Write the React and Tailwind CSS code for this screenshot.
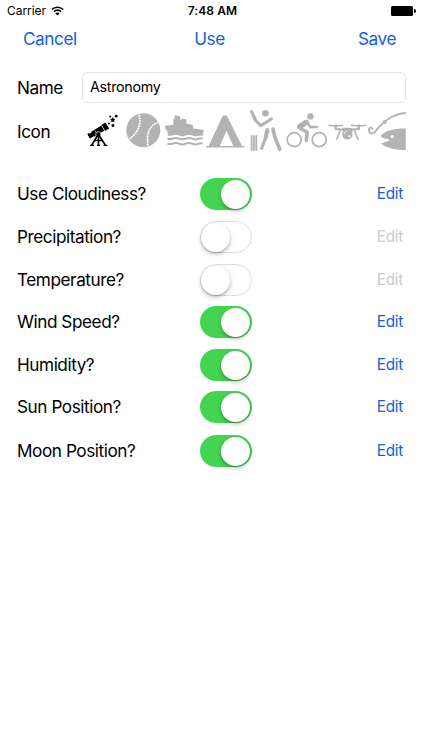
import { useState } from 'react';

const ICONS = ['telescope', 'baseball', 'ship', 'tent', 'cricket', 'bike', 'drone', 'fishing'];

const SETTINGS = [
  { label: 'Use Cloudiness?', on: true, height: 'h-[43px]' },
  { label: 'Precipitation?', on: false, height: 'h-[43px]' },
  { label: 'Temperature?', on: false, height: 'h-[42px]' },
  { label: 'Wind Speed?', on: true, height: 'h-[43px]' },
  { label: 'Humidity?', on: true, height: 'h-[42px]' },
  { label: 'Sun Position?', on: true, height: 'h-[44px]' },
  { label: 'Moon Position?', on: true, height: 'h-[43px]' },
];

// All glyphs share a 40.4 x 40 box
const GLYPHS = {
  telescope: (
    <>
      <path d="M6 25.5 L10.5 22.8" strokeWidth="4.4" />
      <path d="M9.8 23.2 L20 17" strokeWidth="6" />
      <path d="M20.2 17 L24.3 14.5" strokeWidth="7" />
      <path d="M5 22.4 L7.4 27" strokeWidth="1.6" />
      <path d="M12 19.4 L14.6 24" stroke="#fff" strokeWidth=".6" />
      <path d="M18.6 14.4 L21.8 20" stroke="#fff" strokeWidth=".6" />
      <circle cx="15.3" cy="23.3" r="2.6" fill="currentColor" stroke="#fff" strokeWidth=".7" />
      <path d="M14.2 25 L8.8 34 M15.5 25 V34 M16.5 25 L22.3 34 M12 29.5 H19" strokeWidth="1.6" />
      <path d="M7 34.3 H11 M14 34.3 H17 M20.5 34.3 H24.5" strokeWidth="1.3" />
      <path
        d="M29.8 6.5 L30.5 8 L32 8.2 L30.9 9.4 L31.2 11 L29.8 10.2 L28.4 11 L28.7 9.4 L27.6 8.2 L29.1 8Z"
        fill="currentColor"
        strokeWidth=".5"
      />
      <g fill="currentColor" stroke="none">
        <circle cx="27.2" cy="5.4" r="1" />
        <circle cx="33.2" cy="5.2" r="1.4" />
        <circle cx="26" cy="12.4" r="1" />
        <circle cx="30" cy="14.5" r="1.5" />
      </g>
    </>
  ),
  baseball: (
    <>
      <circle cx="20.3" cy="19.3" r="17" fill="currentColor" stroke="none" />
      <g stroke="#fff">
        <path d="M15.3 2 C18.2 9.5 18 20 6.3 28 M35 11.6 C26.5 14 22.8 23 25.2 35.8" strokeWidth=".9" />
        <path
          d="M15.3 2 C18.2 9.5 18 20 6.3 28 M35 11.6 C26.5 14 22.8 23 25.2 35.8"
          strokeWidth="2.4"
          strokeDasharray=".8 1.8"
        />
      </g>
    </>
  ),
  ship: (
    <>
      <path
        d="M1 14.8 L9.3 13.8 V8.5 L10.2 8 L11 4.3 L16.1 5.2 L16.4 8.8 H17.5 L18 7.5 L22.3 8.3 L22.6 12.6 L28.8 14 L29.3 17.4 L39.8 18.9 L38.6 25.2 C36 23.5 34 25.3 31.5 25.3 C28.5 25.3 28 23.7 25 23.7 C22 23.7 21.5 25.3 18.5 25.3 C15.5 25.3 15 23.7 12 23.7 C9 23.7 8 25.3 4 24.8 L3.4 20.3 C1.6 19.3 1 17.5 1 14.8Z"
        fill="currentColor"
        stroke="none"
      />
      <path
        d="M3.5 27.5 C7 29 9 26.9 12 26.9 C15 26.9 15.5 28.4 18.5 28.4 C21.5 28.4 22 26.9 25 26.9 C28 26.9 28.5 28.4 31.5 28.4 C34.5 28.4 35.5 26.5 38.8 27.5 M3.5 32.6 C7 34.2 9 31.9 12 31.9 C15 31.9 15.5 33.5 18.5 33.5 C21.5 33.5 22 31.9 25 31.9 C28 31.9 28.5 33.5 31.5 33.5 C34.5 33.5 35.5 31.5 38.8 32.6"
        strokeWidth="2"
      />
    </>
  ),
  tent: (
    <>
      <path
        d="M18.8 4.5 H22.8 L38 35 H29.3 L22.5 19.7 L15.8 35 H4.7Z"
        fill="currentColor"
        stroke="none"
      />
      <path d="M2 35.8 H40.4" strokeWidth="1.6" />
    </>
  ),
  cricket: (
    <>
      <path d="M6.6 .6 L10 8.2" strokeWidth="3.2" strokeLinecap="round" />
      <path d="M10 8.8 L15.7 14.8 L26.6 7.8" strokeWidth="2.9" strokeLinecap="round" strokeLinejoin="round" />
      <circle cx="20.4" cy="2.2" r="3.3" fill="currentColor" stroke="none" />
      <path d="M6.6 24.2 V39.8 M9 24.2 V39.8 M11.3 24.2 V39.8" strokeWidth="1.8" />
      <path d="M21.5 19.5 L20.2 28 L16.2 38.5" strokeWidth="3" />
      <path d="M22.4 19 L20.6 27.2" strokeWidth="4" strokeLinecap="round" />
      <path d="M28 18 L30 26.5 L34.8 38.3" strokeWidth="3.6" strokeLinecap="round" />
    </>
  ),
  bike: (
    <>
      <circle cx="9.2" cy="28.7" r="7" strokeWidth="1.7" />
      <circle cx="34.2" cy="28.7" r="7" strokeWidth="1.7" />
      <circle cx="25.4" cy="5.4" r="3.2" fill="currentColor" stroke="none" />
      <path d="M14.7 15.8 L21.2 11.3" strokeWidth="5.4" strokeLinecap="round" />
      <path d="M21.8 10.8 L25.3 16 L31.8 16" strokeWidth="2.4" strokeLinecap="round" strokeLinejoin="round" />
      <path d="M15 17.2 L22.2 21.3 L21.3 29.5" strokeWidth="3.5" strokeLinecap="round" strokeLinejoin="round" />
    </>
  ),
  drone: (
    <>
      <path d="M3.5 14.3 L10.7 15 L17.8 14.3 M26 14.3 L33.8 15 L41 14.3" strokeWidth="1.5" />
      <path d="M10.7 13.5 V19 M33.8 13.5 V19" strokeWidth="2.2" />
      <path d="M10 18 L17 18.4 H28 L34.5 18" strokeWidth="2" />
      <path d="M17 18 L19.5 16.8 H25.5 L28 18 L27 22 H18Z" fill="currentColor" stroke="none" />
      <path d="M15.6 19 L11.4 28.7 M29.2 19 L33.2 28.7" strokeWidth="1.6" />
      <circle cx="22.4" cy="23.4" r="5.2" fill="currentColor" stroke="none" />
      <path d="M19.2 23.4 A3.2 3.2 0 0 1 22.4 20.2" stroke="#fff" strokeWidth=".6" />
      <circle cx="24.4" cy="25.3" r="1.1" fill="#fff" stroke="none" />
    </>
  ),
  fishing: (
    <>
      <path
        d="M4.8 16.2 C1.6 17.4 2.8 22.6 6 22.5 C9.2 22.4 11 17.6 14.5 14.4 C20 9.2 27 3.2 39.8 2"
        strokeWidth="1.9"
      />
      <path d="M5 15 L8.3 18.4 L4.6 18.2Z" fill="currentColor" stroke="none" />
      <circle cx="18.8" cy="11" r="1.9" fill="currentColor" stroke="none" />
      <path
        d="M14.6 24.6 C20 19.5 28 17.2 39.8 17.4 V39 C31 38.9 21 37.5 15 32.4 L23.8 29.6 L21.6 28 L16 26.8Z"
        fill="currentColor"
        stroke="none"
      />
      <circle cx="26.2" cy="25.4" r="1.5" fill="#fff" stroke="none" />
    </>
  ),
};

function ActivityIcon({ name, selected, onClick }) {
  return (
    <button onClick={onClick} className={`flex-1 ${selected ? 'text-black' : 'text-[#b3b3b3]'}`}>
      <svg viewBox="0 0 40.4 40" className="block w-full h-10 overflow-visible" fill="none" stroke="currentColor">
        {GLYPHS[name]}
      </svg>
    </button>
  );
}

function Toggle({ on, onClick }) {
  return (
    <button
      role="switch"
      aria-checked={on}
      onClick={onClick}
      className={`flex items-center w-[52px] h-8 rounded-full ${
        on ? 'bg-[#43d551] justify-end pr-[2px]' : 'bg-white border-[1.5px] border-[#dedede] justify-start'
      }`}
    >
      <span className="w-[29px] h-[29px] rounded-full bg-white shadow-[0_2px_4px_rgba(0,0,0,0.28),0_1px_1px_rgba(0,0,0,0.12)]" />
    </button>
  );
}

export default function App() {
  const [name, setName] = useState('Astronomy');
  const [icon, setIcon] = useState('telescope');
  const [rows, setRows] = useState(SETTINGS);

  const toggleRow = (index) => {
    setRows(rows.map((row, i) => (i === index ? { ...row, on: !row.on } : row)));
  };

  return (
    <div className="w-[422px] h-[750px] bg-white text-black font-['Inter',sans-serif] text-[17.2px] leading-6 tracking-[-0.45px] overflow-hidden">
      {/* Status bar */}
      <div className="grid grid-cols-3 items-center h-[22px] pl-[7px] pr-[6px] text-[12px] leading-[18px] tracking-[0.1px]">
        <div className="flex items-center gap-[5px]">
          <span className="tracking-[-0.05px] pb-px">Carrier</span>
          <svg viewBox="0 0 13 10" className="w-[13px] h-[10px]" fill="none" stroke="black">
            <path d="M.8 3.5 C4 .4 9 .4 12.2 3.5 M2.9 5.7 C5 3.8 8 3.8 10.1 5.7" strokeWidth="1.6" />
            <path d="M4.3 7.3 C5.5 6.2 7.5 6.2 8.7 7.3 L6.5 9.6Z" fill="black" stroke="none" />
          </svg>
        </div>
        <span className="text-center font-semibold pl-[2px] pb-px">7:48 AM</span>
        <div className="flex items-center justify-end gap-px">
          <div className="w-[22px] h-[10px] bg-black rounded-[1.5px]" />
          <div className="w-[1.5px] h-1 bg-black rounded-r-full" />
        </div>
      </div>

      {/* Actions */}
      <div className="grid grid-cols-3 h-[34px] pt-[5px] pl-[23px] pr-[26px] text-[#0f62e2]">
        <button className="justify-self-start self-start">Cancel</button>
        <button className="justify-self-center self-start">Use</button>
        <button className="justify-self-end self-start">Save</button>
      </div>

      {/* Name and icon */}
      <div className="flex items-center mt-[15px] pl-[17px] h-8">
        <label className="w-[65px] pt-[2px]">Name</label>
        <input
          value={name}
          onChange={(e) => setName(e.target.value)}
          className="w-[324px] h-[31px] px-[7px] pb-[2px] border border-[#e4e4e4] rounded-[5px] text-[14.3px] tracking-[-0.3px] focus:outline-none"
        />
      </div>
      <div className="flex items-center mt-2 pl-[17px] h-10">
        <span className="w-[66px] pt-[2px]">Icon</span>
        <div className="flex w-[323px]">
          {ICONS.map((item) => (
            <ActivityIcon key={item} name={item} selected={icon === item} onClick={() => setIcon(item)} />
          ))}
        </div>
      </div>

      {/* Conditions */}
      <div className="mt-[27px]">
        {rows.map((row, i) => (
          <div key={row.label} className={`flex items-start pl-[17px] pr-[19px] ${row.height}`}>
            <span className="w-[183px] pt-[4px]">{row.label}</span>
            <Toggle on={row.on} onClick={() => toggleRow(i)} />
            <button
              disabled={!row.on}
              className={`ml-auto pt-[4px] text-[15.3px] tracking-[-0.25px] ${row.on ? 'text-[#0f62e2]' : 'text-[#cacaca]'}`}
            >
              Edit
            </button>
          </div>
        ))}
      </div>
    </div>
  );
}
